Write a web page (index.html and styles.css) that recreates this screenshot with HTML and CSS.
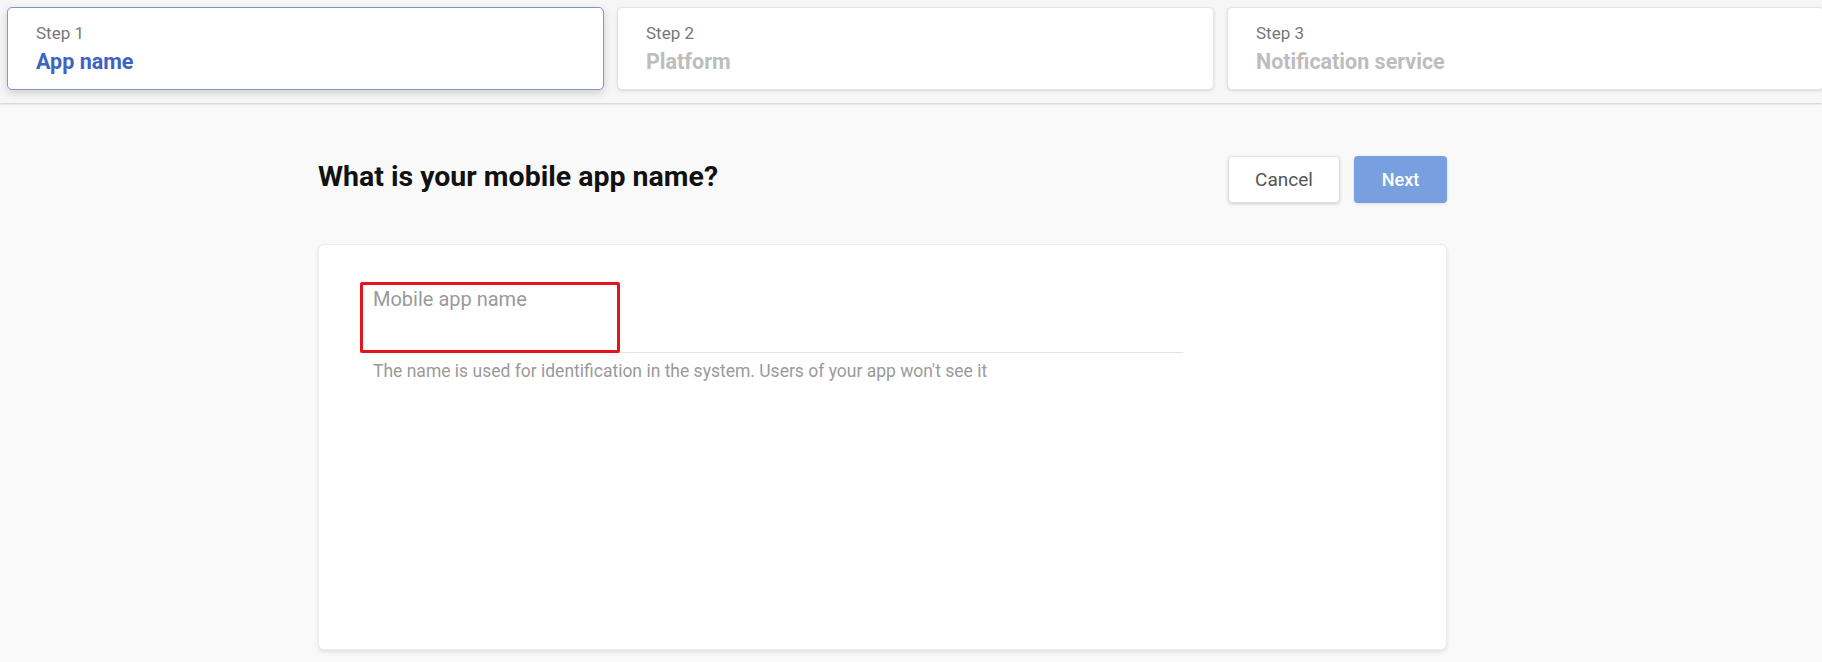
FILE: index.html
```html
<!DOCTYPE html>
<html lang="en">
<head>
<meta charset="utf-8">
<title>New mobile app</title>
<link rel="stylesheet" href="styles.css">
</head>
<body>
<header class="steps">
  <div class="step step-active">
    <div class="step-label">Step 1</div>
    <div class="step-title">App name</div>
  </div>
  <div class="step">
    <div class="step-label">Step 2</div>
    <div class="step-title">Platform</div>
  </div>
  <div class="step">
    <div class="step-label">Step 3</div>
    <div class="step-title">Notification service</div>
  </div>
</header>
<main class="main">
  <div class="top-row">
    <h1 class="heading">What is your mobile app name?</h1>
    <div class="actions">
      <button class="btn btn-cancel">Cancel</button>
      <button class="btn btn-next">Next</button>
    </div>
  </div>
  <section class="card">
    <div class="field">
      <div class="placeholder">Mobile app name</div>
      <div class="highlight"></div>
    </div>
    <div class="helper">The name is used for identification in the system. Users of your app won't see it</div>
  </section>
</main>
</body>
</html>
```
FILE: styles.css
```css
* { box-sizing: border-box; }
html, body { margin: 0; padding: 0; }
body {
  background: #f9f9f9;
  font-family: Roboto, "Liberation Sans", Arial, sans-serif;
  overflow: hidden;
  width: 1822px;
  height: 662px;
}
.steps {
  display: flex;
  gap: 13px;
  padding: 7px 0 13px 7px;
  background: #f6f6f6;
  box-shadow: 0 1px 2px rgba(0,0,0,0.18);
  position: relative;
  z-index: 1;
  overflow: hidden;
}
.step {
  flex: 0 0 597px;
  height: 83px;
  background: #fff;
  border: 1px solid #e4e4e4;
  border-radius: 5px;
  box-shadow: 0 1px 3px rgba(0,0,0,0.12);
  padding: 15px 28px 0;
}
.step-active {
  border-color: #7e97d2;
  box-shadow: 0 3px 8px rgba(0,0,0,0.16);
}
.step-label {
  font-size: 17px;
  line-height: 21px;
  color: #777;
}
.step-title {
  margin-top: 4px;
  font-size: 21.5px;
  line-height: 27px;
  font-weight: 700;
  color: #bdbdbd;
}
.step-active .step-title { color: #3d63c3; }

.main {
  width: 1129px;
  margin-left: 318px;
}
.top-row {
  display: flex;
  justify-content: space-between;
  align-items: flex-start;
  margin-top: 53px;
}
.heading {
  margin: 4px 0 0;
  font-size: 28.5px;
  line-height: 34px;
  font-weight: 700;
  color: #111;
}
.actions {
  display: flex;
  gap: 14px;
}
.btn {
  height: 47px;
  border-radius: 4px;
  font-family: Roboto, "Liberation Sans", Arial, sans-serif;
  font-size: 18px;
  cursor: pointer;
}
.btn-cancel {
  width: 112px;
  background: #fff;
  border: 1px solid #e2e2e2;
  color: #555;
  font-size: 19px;
  box-shadow: 0 1px 3px rgba(0,0,0,0.18);
}
.btn-next {
  width: 93px;
  background: #789fdf;
  border: none;
  color: #fff;
  font-weight: 500;
  box-shadow: 0 1px 3px rgba(0,0,0,0.12);
}
.card {
  margin-top: 41px;
  height: 406px;
  background: #fff;
  border: 1px solid #ececec;
  border-radius: 6px;
  box-shadow: 0 2px 4px rgba(0,0,0,0.1);
  padding: 37px 0 0 41px;
}
.field {
  position: relative;
  width: 823px;
  height: 71px;
  border-bottom: 1px solid #e3e3e3;
  padding: 5px 0 0 13px;
}
.placeholder {
  font-size: 20px;
  line-height: 24px;
  color: #9a9a9a;
}
.highlight {
  position: absolute;
  left: 0;
  top: 0;
  width: 260px;
  height: 71px;
  border: 3px solid #e3141c;
  border-radius: 2px;
}
.helper {
  margin-top: 7px;
  padding-left: 13px;
  font-size: 17.5px;
  line-height: 22px;
  color: #9a9a9a;
}
```
